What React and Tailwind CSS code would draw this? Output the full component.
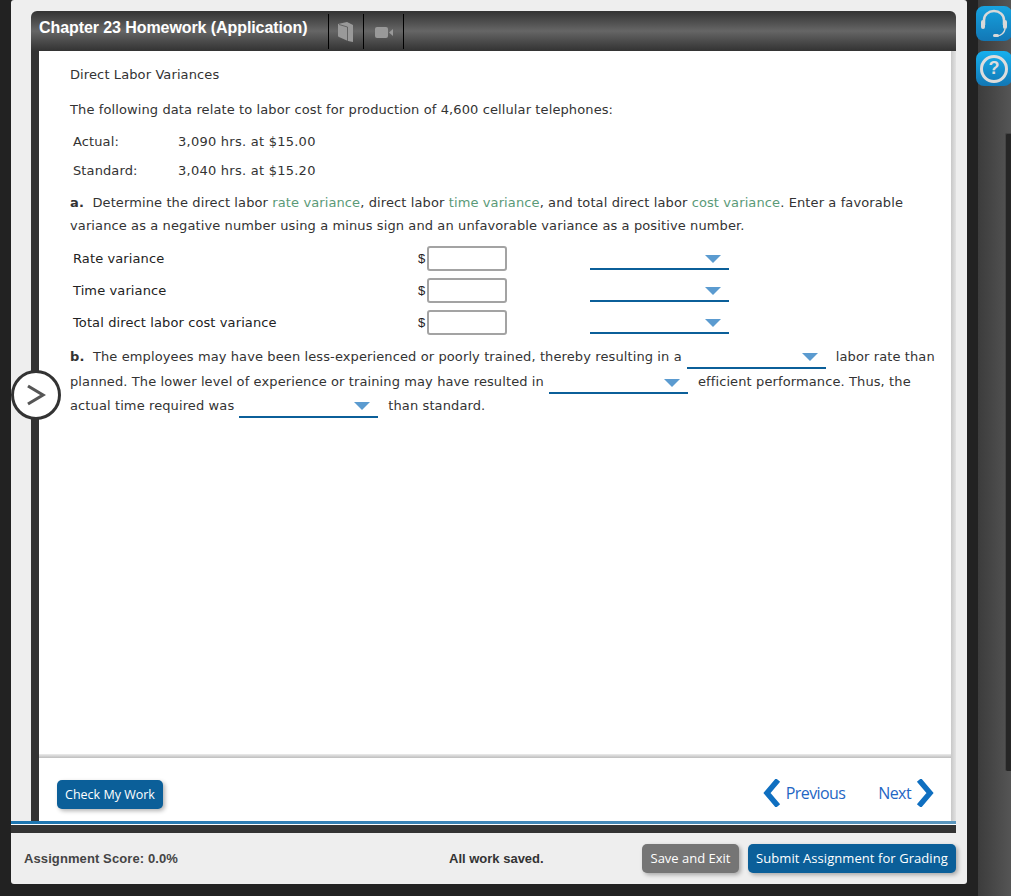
const Dropdown = ({ className = "" }) => (
    <span className={`inline-flex w-[139px] h-[21px] shrink-0 border-b-[2px] border-[#0b5f99] justify-end items-center pr-[8px] ${className}`}>
        <span className="w-0 h-0 border-x-[8px] border-x-transparent border-t-[8px] border-t-[#5b9bd0]" />
    </span>
);

const MoneyRow = ({ label }) => (
    <div className="flex items-center h-[32px]">
        <span className="w-[348px] pl-[3px] text-[#222222]">{label}</span>
        <span className="w-[9px] font-['Liberation_Sans',sans-serif] text-[13px] tracking-normal text-[#222222]">$</span>
        <span className="mt-[-2px] h-[25px] w-[80px] rounded-[3px] border-2 border-[#a3a3a3] bg-white" />
        <Dropdown className="ml-[83px] mt-[1px]" />
    </div>
);

const App = () => {
    return (
        <div className="relative flex h-[896px] w-[1011px] overflow-hidden bg-[#222222] font-['DejaVu_Sans',sans-serif] text-[13px] tracking-[0.11px] text-[#333333]">
            <div className="ml-[11px] flex h-[884px] w-[956px] shrink-0 flex-col rounded-[3px] bg-[#eeeeee]">
                <div className="ml-[20px] mr-[11px] mt-[11px] flex h-[40px] items-stretch rounded-t-[6px] bg-linear-to-b from-[#333333] via-[#666666] to-[#333333]">
                    <h1 className="w-[297px] pl-[8px] pt-[5px] font-['Liberation_Sans',sans-serif] text-[16px] font-bold tracking-[-0.08px] text-white">
                        Chapter 23 Homework (Application)
                    </h1>
                    <div className="mb-[2px] mt-[3px] flex w-[36px] items-center justify-center border-x border-black pt-[1px]">
                        <svg width="16" height="20" viewBox="0 0 16 20">
                            <path d="M0 2 L9 0 L15 3 V20 L10 19 L1 15 Q0 14.5 0 14 Z" fill="#999999" />
                            <path d="M1 2.5 L9.5 5 V19" stroke="#555555" strokeWidth="0.8" fill="none" />
                        </svg>
                    </div>
                    <div className="mb-[2px] mt-[3px] flex w-[40px] items-center justify-center border-r border-black pt-[2px]">
                        <svg width="18" height="11" viewBox="0 0 18 11">
                            <rect x="0" y="0" width="13" height="11" rx="2" fill="#999999" />
                            <path d="M14 5.5 L18 2 V9 Z" fill="#999999" />
                        </svg>
                    </div>
                </div>
                <div className="ml-[20px] mr-[11px] flex h-[770px] shrink-0">
                    <div className="w-[8px] bg-[#333333]" />
                    <div className="flex w-[912px] flex-col bg-white">
                        <div className="flex-1 pl-[31px] pr-[15px] pt-[15px]">
                            <p className="leading-[18px]">Direct Labor Variances</p>
                            <p className="mt-[17px] leading-[18px]">The following data relate to labor cost for production of 4,600 cellular telephones:</p>
                            <div className="mt-[8px] flex h-[29px] items-center pl-[3px]">
                                <span className="w-[105px]">Actual:</span>
                                <span className="tracking-[0.25px]">3,090 hrs. at $15.00</span>
                            </div>
                            <div className="flex h-[29px] items-center pl-[3px]">
                                <span className="w-[105px]">Standard:</span>
                                <span className="tracking-[0.25px]">3,040 hrs. at $15.20</span>
                            </div>
                            <p className="mt-[5.5px] leading-[23px]">
                                <b>a.</b>&nbsp; Determine the direct labor <span className="text-[#5a9a78]">rate variance</span>, direct labor <span className="text-[#5a9a78]">time variance</span>, and total direct labor <span className="text-[#5a9a78]">cost variance</span>. Enter a favorable variance as a negative number using a minus sign and an unfavorable variance as a positive number.
                            </p>
                            <div className="mt-[6.5px]">
                                <MoneyRow label="Rate variance" />
                                <MoneyRow label="Time variance" />
                                <MoneyRow label="Total direct labor cost variance" />
                            </div>
                            <div className="mt-[6px] leading-[24.5px]">
                                <div className="flex items-end whitespace-nowrap">
                                    <span><b>b.</b>&nbsp; The employees may have been less-experienced or poorly trained, thereby resulting in a</span>
                                    <Dropdown className="mx-[5px] mb-[1px]" />
                                    <span className="ml-[5px]">labor rate than</span>
                                </div>
                                <div className="flex items-end whitespace-nowrap">
                                    <span className="mb-[1px]">planned. The lower level of experience or training may have resulted in</span>
                                    <Dropdown className="mx-[5px] mb-[1px]" />
                                    <span className="mb-[1px] ml-[5px]">efficient performance. Thus, the</span>
                                </div>
                                <div className="mt-[-1px] flex items-end whitespace-nowrap">
                                    <span>actual time required was</span>
                                    <Dropdown className="mx-[5px] mb-[1px]" />
                                    <span className="ml-[5px]">than standard.</span>
                                </div>
                            </div>
                        </div>
                        <div className="h-[4px] bg-linear-to-b from-[#ececec] to-[#bdbdbd]" />
                        <div className="flex h-[63px] items-start justify-between pl-[18px] pr-[17px] pt-[22px]">
                            <button className="h-[29px] w-[106px] rounded-[5px] bg-[#0b5f99] pt-[1px] font-['Open_Sans',sans-serif] text-[12.5px] font-medium tracking-normal text-white shadow-[2px_2px_4px_rgba(0,0,0,0.3)]">
                                Check My Work
                            </button>
                            <div className="mt-[-1px] flex items-center gap-[33px] font-['Open_Sans',sans-serif] text-[16px] tracking-[-0.6px] text-[#1f66c4]">
                                <span className="flex items-center gap-[5px]">
                                    <svg width="18" height="28" viewBox="0 0 18 28"><path d="M15 1 L4 14 L15 27" fill="none" stroke="#0f6fc0" strokeWidth="5.5" /></svg>
                                    Previous
                                </span>
                                <span className="flex items-center gap-[5px]">
                                    Next
                                    <svg width="18" height="28" viewBox="0 0 18 28"><path d="M3 1 L14 14 L3 27" fill="none" stroke="#0f6fc0" strokeWidth="5.5" /></svg>
                                </span>
                            </div>
                        </div>
                    </div>
                    <div className="w-[5px] bg-linear-to-r from-[#c8c8c8] to-[#e2e2e2]" />
                </div>
                <div className="mr-[11px] h-[3px] shrink-0 bg-linear-to-r from-[#1c75b0] to-[#5b96bd]" />
                <div className="mr-[11px] h-[1px] shrink-0 bg-white" />
                <div className="mr-[11px] h-[8px] shrink-0 bg-[#333333]" />
                <div className="flex flex-1 items-center pl-[13px] pr-[11px]">
                    <span className="w-[425px] font-['Liberation_Sans',sans-serif] text-[13px] font-bold tracking-[0.1px] text-[#444444]">Assignment Score: 0.0%</span>
                    <span className="font-['Liberation_Sans',sans-serif] text-[13px] font-bold tracking-normal text-[#333333]">All work saved.</span>
                    <div className="ml-auto flex gap-[9px] font-['Open_Sans',sans-serif] text-[13px] tracking-normal text-white">
                        <button className="h-[29px] w-[97px] rounded-[5px] bg-[#757575] shadow-[2px_2px_4px_rgba(0,0,0,0.3)]">
                            Save and Exit
                        </button>
                        <button className="h-[29px] w-[208px] rounded-[5px] bg-[#0b5f99] tracking-[0.07px] shadow-[2px_2px_4px_rgba(0,0,0,0.3)]">
                            Submit Assignment for Grading
                        </button>
                    </div>
                </div>
            </div>
            <div className="ml-[11px] w-[33px] bg-linear-to-r from-[#3c3c3c] to-[#555555]" />

            <div className="absolute left-[11px] top-[370px] flex size-[50px] items-center justify-center rounded-full border-[3px] border-[#333333] bg-white">
                <svg width="20" height="24" viewBox="0 0 20 24"><path d="M2 3 L17 12 L2 21" fill="none" stroke="#555555" strokeWidth="3.2" /></svg>
            </div>
            <div className="absolute left-[976px] top-[6px] flex h-[35px] w-[36px] items-center justify-center rounded-[8px] bg-linear-to-b from-[#17a3e0] to-[#1277b5]">
                <svg width="28" height="30" viewBox="0 0 28 30" fill="none" stroke="#d9d9d9">
                    <path d="M4 16 V11 A10 9 0 0 1 24 11 V16" strokeWidth="2.5" />
                    <rect x="1" y="11" width="4" height="9" rx="2" fill="#d9d9d9" stroke="none" />
                    <rect x="23" y="11" width="4" height="9" rx="2" fill="#d9d9d9" stroke="none" />
                    <path d="M25 20 Q24 26 17 27" strokeWidth="1.5" />
                    <rect x="13" y="25" width="6" height="3" rx="1.5" fill="#d9d9d9" stroke="none" />
                </svg>
            </div>
            <div className="absolute left-[976px] top-[51px] flex h-[35px] w-[36px] items-center justify-center rounded-[8px] bg-linear-to-b from-[#17b0ee] to-[#1277b5]">
                <span className="flex size-[28px] items-center justify-center rounded-full border-[3px] border-[#dddddd] font-['Liberation_Sans',sans-serif] text-[18px] font-bold text-[#dddddd]">?</span>
            </div>
            <div className="absolute left-[1005px] top-[133px] h-[638px] w-[6px] rounded-l-[2px] border-l border-t border-[#444444] bg-[#262626]" />
        </div>
    );
};

export default App;
